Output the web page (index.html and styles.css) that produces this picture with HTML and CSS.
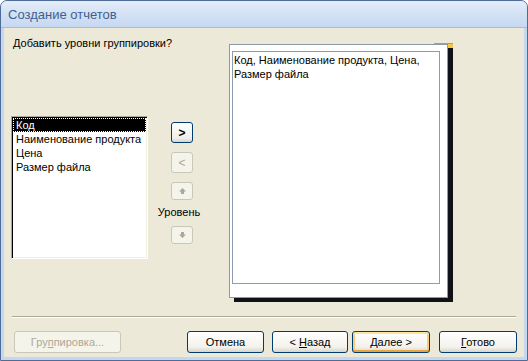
FILE: index.html
```html
<!DOCTYPE html>
<html lang="ru">
<head>
    <meta charset="UTF-8">
    <title>Создание отчетов</title>
    <link rel="stylesheet" href="styles.css">
</head>
<body>
    <div class="window">
        <div class="titlebar">Создание отчетов</div>
        <div class="client">
            <div class="main">
                <div class="left">
                    <p class="prompt">Добавить уровни группировки?</p>
                    <div class="picker">
                        <ul class="listbox">
                            <li class="selected">Код</li>
                            <li>Наименование продукта</li>
                            <li>Цена</li>
                            <li>Размер файла</li>
                        </ul>
                        <div class="movers">
                            <button class="tool">&gt;</button>
                            <button class="tool" disabled>&lt;</button>
                            <button class="tool arrow" disabled>
                                <svg width="7" height="6" viewBox="0 0 7 6"><polygon points="3.5,0 7,3.5 5,3.5 5,6 2,6 2,3.5 0,3.5"/></svg>
                            </button>
                            <span class="level">Уровень</span>
                            <button class="tool arrow" disabled>
                                <svg width="7" height="6" viewBox="0 0 7 6"><polygon points="3.5,6 7,2.5 5,2.5 5,0 2,0 2,2.5 0,2.5"/></svg>
                            </button>
                        </div>
                    </div>
                </div>
                <div class="preview">
                    <div class="tab"></div>
                    <div class="page">
                        <div class="page-inner">Код, Наименование продукта, Цена, Размер файла</div>
                    </div>
                </div>
            </div>
            <div class="separator"></div>
            <div class="footer">
                <button class="btn" disabled style="width: 107px">Гру<u>п</u>пировка...</button>
                <button class="btn cancel">Отмена</button>
                <button class="btn back">&lt; <u>Н</u>азад</button>
                <button class="btn next default"><u>Д</u>алее &gt;</button>
                <button class="btn finish"><u>Г</u>отово</button>
            </div>
        </div>
    </div>
</body>
</html>
```

FILE: styles.css
```css
body {
    margin: 0;
    font-family: "Liberation Sans", Arial, sans-serif;
    font-size: 11px;
    color: #000;
}
.window {
    width: 528px;
    height: 361px;
    box-sizing: border-box;
    display: flex;
    flex-direction: column;
    border: 1px solid #4f6c98;
    border-radius: 7px 7px 0 0;
    overflow: hidden;
    background-color: #c5d7ef;
}
.titlebar {
    height: 26px;
    line-height: 28px;
    padding-left: 7px;
    font-size: 13px;
    color: #3f5f8f;
    background: linear-gradient(#e4edf9, #d3e1f4 50%, #c6d8f1);
    border-bottom: 1px solid #a7bedb;
}
.client {
    flex: 1;
    display: flex;
    flex-direction: column;
    margin: 0 3px 3px 3px;
    background-color: #ece9d8;
}
.main {
    display: flex;
    height: 288px;
    padding-left: 7px;
}
.left {
    width: 218px;
}
.prompt {
    margin: 8px 0 0 2px;
    line-height: 14px;
}
.picker {
    display: flex;
    margin-top: 66px;
}
.listbox {
    list-style: none;
    margin: 0;
    padding: 1px;
    width: 133px;
    height: 139px;
    background-color: #fff;
    border: 1px solid;
    border-color: #aca899 #fff #fff #aca899;
    box-shadow: inset 1px 1px 0 #000, inset -1px -1px 0 #f1efe2;
}
.listbox li {
    height: 14px;
    line-height: 14px;
    padding-left: 3px;
    white-space: nowrap;
}
.listbox li.selected {
    background-color: #000;
    color: #fff;
    outline: 1px dotted #fff;
    outline-offset: -1px;
}
.movers {
    width: 62px;
    display: flex;
    flex-direction: column;
    align-items: center;
    padding-top: 6px;
}
.tool {
    width: 22px;
    height: 21px;
    padding: 0;
    margin-left: 6px;
    font-family: inherit;
    font-size: 12px;
    font-weight: bold;
    color: #000;
    border: 1px solid #003c74;
    border-radius: 3px;
    background: linear-gradient(#fff, #f0efe9 80%, #d8d3c6);
}
.tool:disabled {
    font-weight: normal;
    color: #aca899;
    border-color: #c9c7ba;
    background: #f5f4ea;
}
.tool + .tool {
    margin-top: 9px;
}
.tool.arrow {
    height: 18px;
    display: flex;
    align-items: center;
    justify-content: center;
}
.tool.arrow + .tool.arrow {
    margin-top: 8px;
}
.arrow svg {
    fill: #aca899;
}
.level {
    margin: 5px 0 7px;
    line-height: 14px;
}
.preview {
    position: relative;
    margin-top: 16px;
}
.tab {
    position: absolute;
    top: -1px;
    right: -5px;
    width: 19px;
    height: 11px;
    border-top: 1px solid #ec8a34;
    background: linear-gradient(to right, transparent 14px, #f6c544 14px);
}
.page {
    position: relative;
    box-sizing: border-box;
    width: 219px;
    height: 254px;
    display: flex;
    padding: 6px 7px 13px 2px;
    background-color: #fff;
    border: 1px solid #8b9aa8;
    box-shadow: 5px 4px 0 #111118;
}
.page-inner {
    flex: 1;
    padding: 1px 0 0 1px;
    line-height: 14px;
    border: 1px solid #8c9db2;
}
.separator {
    margin: 0 8px;
    border-top: 1px solid #aca899;
    border-bottom: 1px solid #fff;
}
.footer {
    display: flex;
    padding: 13px 7px 0 10px;
}
.btn {
    height: 22px;
    padding: 0;
    font-family: inherit;
    font-size: 11px;
    color: #000;
    border: 1px solid #003c74;
    border-radius: 3px;
    background: linear-gradient(#fff, #f3f2ec 75%, #d9d4c7);
}
.btn:disabled {
    color: #aca899;
    border-color: #c9c7ba;
    background: #f5f4ea;
}
.btn.cancel {
    width: 77px;
    margin-left: auto;
}
.btn.back {
    width: 76px;
    margin-left: 8px;
}
.btn.next {
    width: 78px;
    margin-left: 4px;
}
.btn.finish {
    width: 78px;
    margin-left: 9px;
}
.btn.default {
    box-shadow: inset 0 2px #fde49f, inset 0 -2px #eaa53c, inset 2px 0 #f8cf78, inset -2px 0 #f8cf78;
}
```
